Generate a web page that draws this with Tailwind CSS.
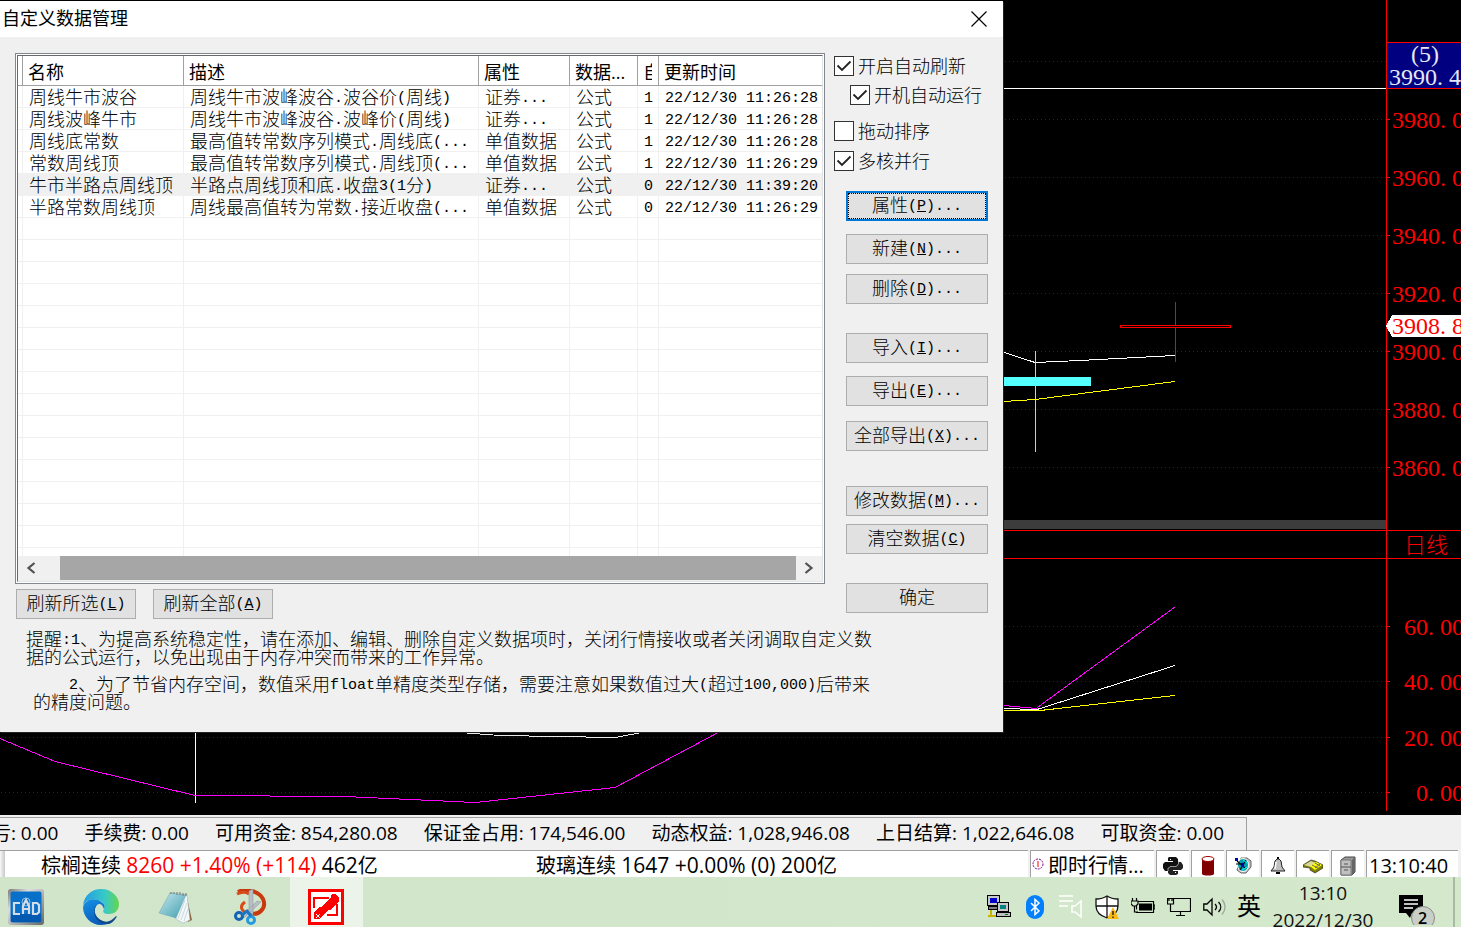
<!DOCTYPE html>
<html lang="zh-CN">
<head>
<meta charset="utf-8">
<title>自定义数据管理</title>
<script src="https://cdn.jsdelivr.net/npm/@tailwindcss/browser@4"></script>
</head>
<body class="flex h-screen flex-col overflow-hidden bg-black text-black font-['Open_Sans','Noto_Sans_CJK_SC',sans-serif]">

<main class="relative min-h-0 flex-1 overflow-hidden bg-black">
  <!-- Price chart -->
  <svg class="block h-full w-full font-['Liberation_Serif','Noto_Sans_CJK_SC',serif] text-[24px]" viewBox="0 0 1461 815" preserveAspectRatio="xMaxYMin slice" fill="none" shape-rendering="crispEdges" role="img" aria-label="日线">
    <g stroke="#800000" stroke-dasharray="1 3">
      <path d="M1 61.5H1386M1 119.5H1386M1 177.5H1386M1 235.5H1386M1 293.5H1386M1 351.5H1386M1 409.5H1386M1 467.5H1386M1 626.5H1386M1 681.5H1386M1 737.5H1386M1 792.5H1386"/>
    </g>
    <rect x="1003" y="520" width="383" height="9" fill="#3c3c3c"/>
    <path d="M1003 88.5H1386" stroke="#fff"/>
    <rect x="1387" y="43" width="74" height="45" fill="#000080"/>
    <path d="M1386.500 0V811M1387 42.500H1461M1387 88.500H1461M1003 530.500H1461M1003 558.500H1461M1387 119.500H1390M1387 177.500H1390M1387 235.500H1390M1387 293.500H1390M1387 351.500H1390M1387 409.500H1390M1387 467.500H1390M1387 626.500H1390M1387 681.500H1390M1387 737.500H1390M1387 792.500H1390" stroke="#f00"/>
    <path d="M1120.500 325.500H1230.500V327.500H1120.500ZM1175.500 302V325M1175.500 328V362" stroke="#f00"/>
    <path d="M1003 352L1035 362.500L1080 360.500L1175 355.500" stroke="#fff"/>
    <path d="M1035.500 351V452" stroke="#54ffff"/>
    <rect x="1003" y="377" width="88" height="9" fill="#54ffff"/>
    <path d="M1003 401.500L1035 399.500L1175 381.500" stroke="#ff0"/>
    <path d="M1003 710.500H1040L1175 695.500" stroke="#ff0"/>
    <path d="M1003 708.500L1037 709.500L1175 665.500" stroke="#fff"/>
    <path d="M1003 705.500L1036 708.500L1175 607" stroke="#f0f"/>
    <path d="M440 731L500 735.500L615 737.500L650 731" stroke="#e8e8e8"/>
    <path d="M195.500 731V803" stroke="#fff"/>
    <path d="M0 738.500L55 761.500L195 795.500L345 796.500L475 802.500L615 787.500L720 731.500" stroke="#f0f"/>
    <path d="M1386 326L1392 315H1461V337H1392Z" fill="#fff"/>
    <g fill="#f00">
      <text x="1392" y="128">3980.<tspan x="1452">0</tspan></text><text x="1392" y="186">3960.<tspan x="1452">0</tspan></text><text x="1392" y="244">3940.<tspan x="1452">0</tspan></text>
      <text x="1392" y="302">3920.<tspan x="1452">0</tspan></text><text x="1392" y="334">3908.<tspan x="1452">8</tspan></text><text x="1392" y="360">3900.<tspan x="1452">0</tspan></text>
      <text x="1392" y="418">3880.<tspan x="1452">0</tspan></text><text x="1392" y="476">3860.<tspan x="1452">0</tspan></text>
      <text x="1404" y="635">60.<tspan x="1440">00</tspan></text><text x="1404" y="690">40.<tspan x="1440">00</tspan></text><text x="1404" y="746">20.<tspan x="1440">00</tspan></text><text x="1416" y="801">0.<tspan x="1440">00</tspan></text>
      <text class="text-[22px] font-light" x="1404" y="553">日线</text>
    </g>
    <g fill="#e6e6f5"><text x="1411" y="62">(5)</text><text x="1389" y="85">3990.<tspan x="1449">4</tspan></text></g>
  </svg>

  <!-- Dialog window floating over the chart -->
  <section role="dialog" aria-labelledby="dlg-title" class="absolute top-px left-0 w-[1003px] bg-[#f0f0f0] pb-[22px] shadow-[1px_1px_0_#222]">
    <header class="flex h-9 items-center justify-between bg-white pr-4 pl-0.5">
      <h1 id="dlg-title" class="pb-0.5 text-[18px] leading-6">自定义数据管理</h1>
      <button aria-label="关闭"><svg class="h-4 w-4" viewBox="0 0 16 16" stroke="#000" stroke-width="1.200"><path d="M.5 .5L15.500 15.500M15.500 .5L.5 15.500"/></svg></button>
    </header>

    <div class="pt-4 font-light leading-[18px] text-[18px] font-['Noto_Sans_CJK_SC',sans-serif] [&_i]:align-[2px] [&_i]:leading-[0px] [&_i]:font-normal [&_i]:not-italic [&_i]:text-[15px] [&_i]:font-['Liberation_Mono',monospace]">
      <div class="flex">
        <div class="ml-[15px] w-[810px]">
          <div class="border border-[#828790] bg-white p-px">
            <div class="border border-[#e3e3e3] border-t-[#696969] border-l-[#696969]">
              <table class="w-full table-fixed border-separate border-spacing-0 text-left whitespace-nowrap [&_tbody_td]:h-[22px] [&_tbody_td]:overflow-hidden [&_tbody_td]:border-r [&_tbody_td]:border-b [&_tbody_td]:border-[#f0f0f0] [&_tbody_td]:p-0 [&_tbody_td]:pb-0.5 [&_tbody_td]:pl-1.5 [&_th]:overflow-hidden [&_th]:border-r [&_th]:border-b [&_th]:border-[#a0a0a0] [&_th]:p-0 [&_th]:pl-[5px] [&_th]:font-normal [&_th:last-child]:border-r-0 [&_tbody_td:last-child]:border-r-0">
                <colgroup><col class="w-[5px]"><col class="w-[161px]"><col class="w-[295px]"><col class="w-[91px]"><col class="w-[68px]"><col class="w-[21px]"><col></colgroup>
                <thead><tr class="h-[30px]"><th class="pl-0!"></th><th>名称</th><th>描述</th><th>属性</th><th>数据<span class="leading-[0px] font-['Open_Sans']">...</span></th><th><span class="block w-[9px] overflow-hidden">自</span></th><th>更新时间</th></tr></thead>
                <tbody class="[&_td:first-child]:pl-0!">
                  <tr><td></td><td>周线牛市波谷</td><td>周线牛市波峰波谷<i>.</i>波谷价<i>(</i>周线<i>)</i></td><td>证券<i>...</i></td><td>公式</td><td><i>1</i></td><td><i>22/12/30 11:26:28</i></td></tr>
                  <tr><td></td><td>周线波峰牛市</td><td>周线牛市波峰波谷<i>.</i>波峰价<i>(</i>周线<i>)</i></td><td>证券<i>...</i></td><td>公式</td><td><i>1</i></td><td><i>22/12/30 11:26:28</i></td></tr>
                  <tr><td></td><td>周线底常数</td><td>最高值转常数序列模式<i>.</i>周线底<i>(...</i></td><td>单值数据</td><td>公式</td><td><i>1</i></td><td><i>22/12/30 11:26:28</i></td></tr>
                  <tr><td></td><td>常数周线顶</td><td>最高值转常数序列模式<i>.</i>周线顶<i>(...</i></td><td>单值数据</td><td>公式</td><td><i>1</i></td><td><i>22/12/30 11:26:29</i></td></tr>
                  <tr class="bg-[#f0f0f0]"><td></td><td>牛市半路点周线顶</td><td>半路点周线顶和底<i>.</i>收盘<i>3(1</i>分<i>)</i></td><td>证券<i>...</i></td><td>公式</td><td><i>0</i></td><td><i>22/12/30 11:39:20</i></td></tr>
                  <tr><td></td><td>半路常数周线顶</td><td>周线最高值转为常数<i>.</i>接近收盘<i>(...</i></td><td>单值数据</td><td>公式</td><td><i>0</i></td><td><i>22/12/30 11:26:29</i></td></tr>
                  <tr><td></td><td></td><td></td><td></td><td></td><td></td><td></td></tr>
                  <tr><td></td><td></td><td></td><td></td><td></td><td></td><td></td></tr>
                  <tr><td></td><td></td><td></td><td></td><td></td><td></td><td></td></tr>
                  <tr><td></td><td></td><td></td><td></td><td></td><td></td><td></td></tr>
                  <tr><td></td><td></td><td></td><td></td><td></td><td></td><td></td></tr>
                  <tr><td></td><td></td><td></td><td></td><td></td><td></td><td></td></tr>
                  <tr><td></td><td></td><td></td><td></td><td></td><td></td><td></td></tr>
                  <tr><td></td><td></td><td></td><td></td><td></td><td></td><td></td></tr>
                  <tr><td></td><td></td><td></td><td></td><td></td><td></td><td></td></tr>
                  <tr><td></td><td></td><td></td><td></td><td></td><td></td><td></td></tr>
                  <tr><td></td><td></td><td></td><td></td><td></td><td></td><td></td></tr>
                  <tr><td></td><td></td><td></td><td></td><td></td><td></td><td></td></tr>
                  <tr><td></td><td></td><td></td><td></td><td></td><td></td><td></td></tr>
                  <tr><td></td><td></td><td></td><td></td><td></td><td></td><td></td></tr>
                  <tr><td></td><td></td><td></td><td></td><td></td><td></td><td></td></tr>
                </tbody>
                <tfoot class="[&_td]:h-2 [&_td]:border-r [&_td]:border-[#f0f0f0] [&_td]:p-0 [&_td:last-child]:border-r-0"><tr><td></td><td></td><td></td><td></td><td></td><td></td><td></td></tr></tfoot>
              </table>
              <div class="flex h-[25px] bg-[#f0f0f0] pb-px">
                <button aria-label="向左滚动" class="grid w-[42px] place-items-center pr-4"><svg class="h-3 w-3" viewBox="0 0 12 12" fill="none" stroke="#505050" stroke-width="2.200"><path d="M9.500 1L3.500 6L9.500 11"/></svg></button>
                <div class="flex-1 bg-[#a6a6a6]"></div>
                <button aria-label="向右滚动" class="grid w-[26px] place-items-center"><svg class="h-3 w-3" viewBox="0 0 12 12" fill="none" stroke="#505050" stroke-width="2.200"><path d="M2.500 1L8.500 6L2.500 11"/></svg></button>
              </div>
            </div>
          </div>
          <div class="mt-[5px] ml-px flex gap-[17px] [&>button]:h-[30px] [&>button]:w-[120px] [&>button]:border [&>button]:border-[#adadad] [&>button]:bg-[#e1e1e1] [&>button]:pb-1">
            <button>刷新所选<i>(<u>L</u>)</i></button>
            <button>刷新全部<i>(<u>A</u>)</i></button>
          </div>
        </div>

        <div class="ml-[9px] pt-[3px]">
          <div class="flex flex-col items-start [&_label]:flex [&_label]:h-5 [&_label]:gap-1 [&_span]:relative [&_span]:block [&_span]:h-5 [&_span]:w-5 [&_input]:block [&_input]:h-5 [&_input]:w-5 [&_input]:appearance-none [&_input]:border [&_input]:border-[#333] [&_input]:bg-white [&_svg]:pointer-events-none [&_svg]:absolute [&_svg]:inset-0 [&_svg]:hidden [&_input:checked+svg]:block">
            <label><span><input type="checkbox" checked><svg viewBox="0 0 20 20" fill="none" stroke="#222" stroke-width="1.800"><path d="M3.500 9.500L8 14L16.500 5.500"/></svg></span>开启自动刷新</label>
            <label class="mt-[9px] ml-4"><span><input type="checkbox" checked><svg viewBox="0 0 20 20" fill="none" stroke="#222" stroke-width="1.800"><path d="M3.500 9.500L8 14L16.500 5.500"/></svg></span>开机自动运行</label>
            <label class="mt-4"><span><input type="checkbox"><svg viewBox="0 0 20 20" fill="none" stroke="#222" stroke-width="1.800"><path d="M3.500 9.500L8 14L16.500 5.500"/></svg></span>拖动排序</label>
            <label class="mt-2.5"><span><input type="checkbox" checked><svg viewBox="0 0 20 20" fill="none" stroke="#222" stroke-width="1.800"><path d="M3.500 9.500L8 14L16.500 5.500"/></svg></span>多核并行</label>
          </div>
          <div class="mt-5 ml-3 flex w-[142px] flex-col [&>button]:h-[30px] [&>button]:border [&>button]:border-[#adadad] [&>button]:bg-[#e1e1e1] [&>button]:pb-1">
            <button class="pb-0! outline-2 -outline-offset-2 outline-[#0078d7]"><span class="mx-px block border border-dotted border-black pt-px pb-[5px]">属性<i>(<u>P</u>)...</i></span></button>
            <button class="mt-[13px]">新建<i>(<u>N</u>)...</i></button>
            <button class="mt-2.5">删除<i>(<u>D</u>)...</i></button>
            <button class="mt-[29px]">导入<i>(<u>I</u>)...</i></button>
            <button class="mt-[13px]">导出<i>(<u>E</u>)...</i></button>
            <button class="mt-[15px]">全部导出<i>(<u>X</u>)...</i></button>
            <button class="mt-[35px]">修改数据<i>(<u>M</u>)...</i></button>
            <button class="mt-2">清空数据<i>(<u>C</u>)</i></button>
            <button class="mt-[29px]">确定</button>
          </div>
        </div>
      </div>
      <p class="mt-2.5 ml-[26px] whitespace-nowrap">提醒<i>:1</i>、为提高系统稳定性，请在添加、编辑、删除自定义数据项时，关闭行情接收或者关闭调取自定义数<br>据的公式运行，以免出现由于内存冲突而带来的工作异常。</p>
      <p class="mt-[9px] ml-[33px] whitespace-nowrap"><i class="ml-9">2</i>、为了节省内存空间，数值采用<i>float</i>单精度类型存储，需要注意如果数值过大<i>(</i>超过<i>100,000)</i>后带来<br>的精度问题。</p>
    </div>
  </section>
</main>

<!-- Account status bar -->
<div class="flex h-[35px] shrink-0 bg-[#f0f0f0] pt-0.5 whitespace-nowrap text-[19px]">
  <div class="flex w-[1247px] justify-end gap-[26px] overflow-hidden border-t border-r border-[#a0a0a0] pr-[22px] leading-[31px]">
    <span>浮动盈亏: 0.00</span><span>手续费: 0.00</span><span>可用资金: 854,280.08</span><span>保证金占用: 174,546.00</span><span>动态权益: 1,028,946.08</span><span>上日结算: 1,022,646.08</span><span>可取资金: 0.00</span>
  </div>
</div>

<!-- Ticker -->
<div class="flex h-[27px] shrink-0 gap-[2px] bg-[#f0f0f0] pr-[3px] text-[20px] leading-[30px] whitespace-nowrap">
  <div class="flex min-w-0 flex-1 border-t border-[#a0a0a0] bg-white [&_b]:text-[21px] [&_b]:leading-[0px] [&_b]:font-normal">
    <div class="h-full w-[5px] bg-linear-to-r from-[#f8f8f8] to-[#c8c8c8]"></div>
    <p class="ml-9 w-[495px]">棕榈连续 <b class="text-[#f00]">8260 +1.40% (+114)</b> <b>462</b>亿</p>
    <p>玻璃连续 <b>1647 +0.00% (0) 200</b>亿</p>
  </div>
  <div class="flex w-[124px] items-center gap-1 overflow-hidden border-t border-l border-[#a0a0a0] bg-white pl-px">
    <svg class="h-3 w-3 shrink-0" viewBox="0 0 12 12" fill="none"><circle cx="6" cy="6" r="5" stroke="#800080" stroke-dasharray="2 1"/><path d="M6 3V9" stroke="#f00"/></svg>
    <span class="pt-1">即时行情<span class="leading-[0px]">...</span></span>
  </div>
  <div class="flex gap-[2px] [&>button]:grid [&>button]:w-[33px] [&>button]:place-items-center [&>button]:border-t [&>button]:border-l [&>button]:border-[#a0a0a0] [&>button]:bg-white [&>button]:pt-1 [&_svg]:h-5 [&_svg]:w-5">
    <button aria-label="Python"><svg viewBox="0 0 20 20"><path d="M6 1H13L15 3V9L13 11H7L5 13V15H2L0 12V8L2 6H10V5H5V2Z" fill="#111"/><path d="M15 6H18L20 9V12L18 14H10V15H15V18L13 19H7L5 17V13L7 11H13L15 9Z" fill="#222"/><path d="M5 15V12.500L7 10.500H13L15.500 8V5" stroke="#ccc" stroke-width=".7" fill="none"/><path d="M7 3H8V4H7ZM12 16H13V17H12Z" fill="#fff"/></svg></button>
    <button aria-label="数据库"><svg viewBox="0 0 20 20"><path d="M4 3V18C5 20 15 20 16 18V3Z" fill="#800000"/><ellipse cx="10" cy="3" rx="6" ry="2.500" fill="#fff" stroke="#a00000"/></svg></button>
    <button aria-label="雷达"><svg viewBox="0 0 20 20"><path d="M8 2H14L18 5V11L13 17H8L4 14Z" fill="#c0c0c0" stroke="#666"/><ellipse cx="10" cy="9" rx="5.500" ry="6.500" fill="#00a0a8" stroke="#fff"/><path d="M4 5L12 12M13 4L7 14M3 8H9" stroke="#000" stroke-width="1.100"/><path d="M10 4L14 7M9 14L14 11" stroke="#0ff"/><path d="M2 2H5V5H2ZM8 7H11V11H8Z" fill="#0000b0"/></svg></button>
    <button aria-label="提醒"><svg viewBox="0 0 20 20"><path d="M9 3H11L13 5L14 11L17 15H3L6 11L7 5Z" fill="#c0c0c0" stroke="#222"/><path d="M8 6L7 13" stroke="#fff" stroke-width="1.500"/><path d="M9 2H11M8 17H12" stroke="#000" stroke-width="2"/></svg></button>
    <button aria-label="标签"><svg viewBox="0 0 20 20"><path d="M0 9L8 4L12 5L20 9V12L12 17L7 14V12L0 11Z" fill="#808000" stroke="#333" stroke-width=".7"/><path d="M1 9L8 5L13 7L8 11Z" fill="#d8d8a0"/><path d="M7 10L13 6L19 9L12 14Z" fill="#ff0"/><path d="M9 9L15 12M12 7L17 10M12 12L17 8" stroke="#666"/></svg></button>
    <button aria-label="文件柜"><svg viewBox="0 0 20 20"><path d="M3 4L7 1H17V16L14 19H3Z" fill="#999" stroke="#444"/><path d="M3 4H13V19H3Z" fill="#c0c0c0" stroke="#777"/><path d="M3 11H13M6 8H10M6 14H10" stroke="#555"/><path d="M14 4L17 1V16L14 19Z" fill="#666"/></svg></button>
  </div>
  <time class="w-[92px] border-t border-l border-[#a0a0a0] bg-white pl-0.5">13:10:40</time>
</div>

<!-- Taskbar -->
<footer class="flex h-[50px] shrink-0 justify-between overflow-hidden bg-linear-to-r from-[#d0e5ca] to-[#d4e8cc]">
  <nav class="-ml-[10px] flex gap-[2px] [&>button]:grid [&>button]:w-[73px] [&>button]:place-items-center [&>button]:pt-2.5 [&>button]:pr-px [&_svg]:h-9 [&_svg]:w-9">
    <button aria-label="CAD"><svg viewBox="0 0 36 36"><defs><linearGradient id="metal" x2="1" y2="1"><stop stop-color="#777"/><stop offset=".3" stop-color="#ddd"/><stop offset="1" stop-color="#666"/></linearGradient></defs><rect width="36" height="36" rx="3" fill="url(#metal)"/><rect x="2.500" y="2.500" width="31" height="31" rx="2" fill="#0870c8"/><path d="M3 25H33V33H3Z" fill="#045ab0"/><circle cx="18" cy="13" r="4" fill="none" stroke="#8bbde8"/><path d="M12 14H6V25H12M15 25V17L18 11L21 17V25M15 20H21M25 14H29L31 16V23L29 25H25Z" fill="none" stroke="#d5dce5" stroke-width="2.200"/></svg></button>
    <button aria-label="Edge"><svg viewBox="0 0 36 36"><defs><linearGradient id="ea" x2="1"><stop stop-color="#239ce0"/><stop offset=".6" stop-color="#36c9ca"/><stop offset="1" stop-color="#65d64f"/></linearGradient><linearGradient id="eb" x2=".5" y2="1"><stop stop-color="#1593e6"/><stop offset="1" stop-color="#0a59b8"/></linearGradient></defs><path d="M0 17C1 6 9 0 18 0C29 0 36 8 36 15C36 22 31 25 26 25C21 25 19 23 21 20C23 16 20 12 15 11C8 9 2 12 0 17Z" fill="url(#ea)"/><path d="M0 18C2 11 9 9 15 11C20 13 23 16 21 20L20 18C19 15 16 14 14 16C9 21 13 32 23 33L29 33C26 35 22 36 18 36C8 36 0 28 0 18Z" fill="url(#eb)"/><path d="M14 16C9 21 12 29 20 32C25 34 29 31 32 28C34 26 34 27 33 29C31 32 29 34 26 35C17 36 11 30 11 22C11 19 12 17 14 16Z" fill="#114a8b"/></svg></button>
    <button aria-label="记事本"><svg viewBox="0 0 36 36"><defs><linearGradient id="np" x2="1" y2="1"><stop stop-color="#c6e8ee"/><stop offset="1" stop-color="#3f9dae"/></linearGradient></defs><path d="M28 5L34 31L30 33L24 8Z" fill="#8b6a3e"/><path d="M12 4L29 6L32 31L25 34L18 30Z" fill="#f5f8fa" stroke="#9ab" stroke-width=".5"/><path d="M20 30L27 11M23 31L29 14M26 32L30 20" stroke="#9bb" stroke-width=".5"/><path d="M12 4L28 6L18 29L1 24Z" fill="url(#np)" stroke="#6da7b0" stroke-width=".5"/><path d="M13 3V5M16 3V5M19 3V6M22 3V6M25 4V7M28 4V7" stroke="#777"/></svg></button>
    <button aria-label="截图工具"><svg viewBox="0 0 36 36"><path d="M5 3C13 -1 26 2 30 10C34 19 26 27 17 24" fill="none" stroke="#c83a0e" stroke-width="4"/><path d="M4 5C8 3 13 3 16 5M16 24C8 23 6 17 12 13" fill="none" stroke="#d84a1a" stroke-width="3"/><path d="M16 2L20 0V26L16 23ZM28 13L11 29L9 27L24 12Z" fill="#b8bec5" stroke="#8a9299" stroke-width=".5"/><circle cx="6" cy="27" r="3.500" fill="none" stroke="#1464b4" stroke-width="3"/><circle cx="18" cy="31" r="3.500" fill="none" stroke="#249be0" stroke-width="3"/><path d="M9 26L14 22L18 27" fill="none" stroke="#1976c4" stroke-width="3"/></svg></button>
    <button aria-label="行情软件" class="bg-[#ecf4e9]"><svg viewBox="0 0 36 36" shape-rendering="crispEdges"><rect width="36" height="36" fill="#f00"/><rect x="3" y="3" width="30" height="30" fill="#fff"/><path d="M6 19V9H21M29 15V26H19" fill="none" stroke="#f00" stroke-width="2"/><path d="M6 30V23L11 18H13L23 8V6L25 5H28L31 9V12L22 21H20L12 30Z" fill="#f00"/><path d="M8 25H9V26H8ZM11 25H12V26H11ZM8 28H9V29H8ZM11 28H12V29H11ZM9 26H11V28H9Z" fill="#fff"/></svg></button>
  </nav>
  <div class="flex [&>button]:grid [&>button]:w-9 [&>button]:place-items-center [&>button]:pt-2.5 [&_svg]:h-6 [&_svg]:w-6">
    <button aria-label="网络连接"><svg viewBox="0 0 24 24" shape-rendering="crispEdges"><rect x=".5" y=".5" width="12" height="10" fill="#c8c8c8" stroke="#000"/><rect x="3" y="3" width="7" height="5" fill="#0000c8"/><path d="M1 11H14V14H1Z" fill="#808080" stroke="#000"/><rect x="10.500" y="7.500" width="11" height="9" fill="#c8c8c8" stroke="#000"/><rect x="13" y="10" width="6" height="4" fill="#008080"/><path d="M9.500 17.500H23.500V21.500H9.500Z" fill="#c0c0c0" stroke="#000"/><path d="M4 15V21M1 21H9" stroke="#c8b400" stroke-width="2"/><path d="M18 19H21" stroke="#008000"/></svg></button>
    <button aria-label="蓝牙"><svg viewBox="0 0 24 24"><rect x="3" y="0" width="18" height="24" rx="9" fill="#0080ff"/><path d="M8 8L16 16L12 19.500V4.500L16 8L8 16" fill="none" stroke="#fff" stroke-width="1.500"/></svg></button>
    <button aria-label="音频管理"><svg viewBox="0 0 24 24" fill="none" stroke="#fff" stroke-width="1.500"><path d="M0 1H14M0 6H14M0 11H9M13 11H16L22 6V22L16 17H13Z"/></svg></button>
    <button aria-label="安全中心"><svg viewBox="0 0 24 24"><path d="M12 1C9 3 5 4 1 4V11C1 17 6 21 12 23C18 21 23 17 23 11V4C19 4 15 3 12 1Z" fill="#fff" stroke="#111" stroke-width="1.300"/><path d="M12 1V23M1 11H23" stroke="#111" stroke-width="1.300"/><path d="M18 12L24 24H12Z" fill="#fdb913"/><path d="M18 16V20M18 21.500V23" stroke="#111" stroke-width="1.300"/></svg></button>
    <button aria-label="电池"><svg viewBox="0 0 24 24"><path d="M5.500 6.500V17.500H22.500V6.500ZM22.500 10H24V14H22.500" fill="none" stroke="#000" stroke-width="1.200"/><path d="M8 8.500H21V15.500H8Z"/><path d="M1.500 3V6M5.500 3V6M0 6H7V9L5 11H2L0 9ZM3.500 11V17H7" fill="#d2e6cb" stroke="#000" stroke-width="1.200"/></svg></button>
    <button aria-label="网络"><svg viewBox="0 0 24 24" fill="none" stroke="#000" stroke-width="1.200"><path d="M7 3.500H23.500V16.500H3.500V10M13.500 16.500V20.500M9 20.500H18M.5 3.500H6.500V9H.5ZM2 4V6M5 4V6M3.500 9V16"/></svg></button>
    <button aria-label="音量"><svg viewBox="0 0 24 24" fill="none" stroke="#000" stroke-width="1.300"><path d="M.8 9H4L9 4V20L4 15H.8ZM12 9C14 11 14 13 12 15M15.500 7C18.500 10 18.500 14 15.500 17"/><path d="M19 4.500C23 9 23 15 19 19.500" stroke="#9aa99a"/></svg></button>
    <button class="w-8! pt-2! text-[24px] leading-8">英</button>
    <button class="block! w-[116px]! pt-[3px]! text-center text-[19px] leading-[27px] text-[#111]">13:10<br>2022/12/30</button>
    <button aria-label="通知" class="w-[72px]!"><span class="relative block h-9 w-9"><svg class="absolute inset-0 h-9! w-9!" viewBox="0 0 36 36"><path d="M0 6H24V24H13L11 29L7 24H0Z"/><path d="M5 11H19M5 15H19M5 19H14" stroke="#fff" stroke-width="1.300"/><circle cx="24" cy="29" r="11.500" fill="#c9cfc7" stroke="#888"/></svg><b class="absolute top-[17px] left-[19px] text-[16px] leading-6 font-semibold">2</b></span></button>
    <div class="mr-1.5 w-0.5 bg-[#a9b9a4]"></div>
  </div>
</footer>
</body>
</html>
